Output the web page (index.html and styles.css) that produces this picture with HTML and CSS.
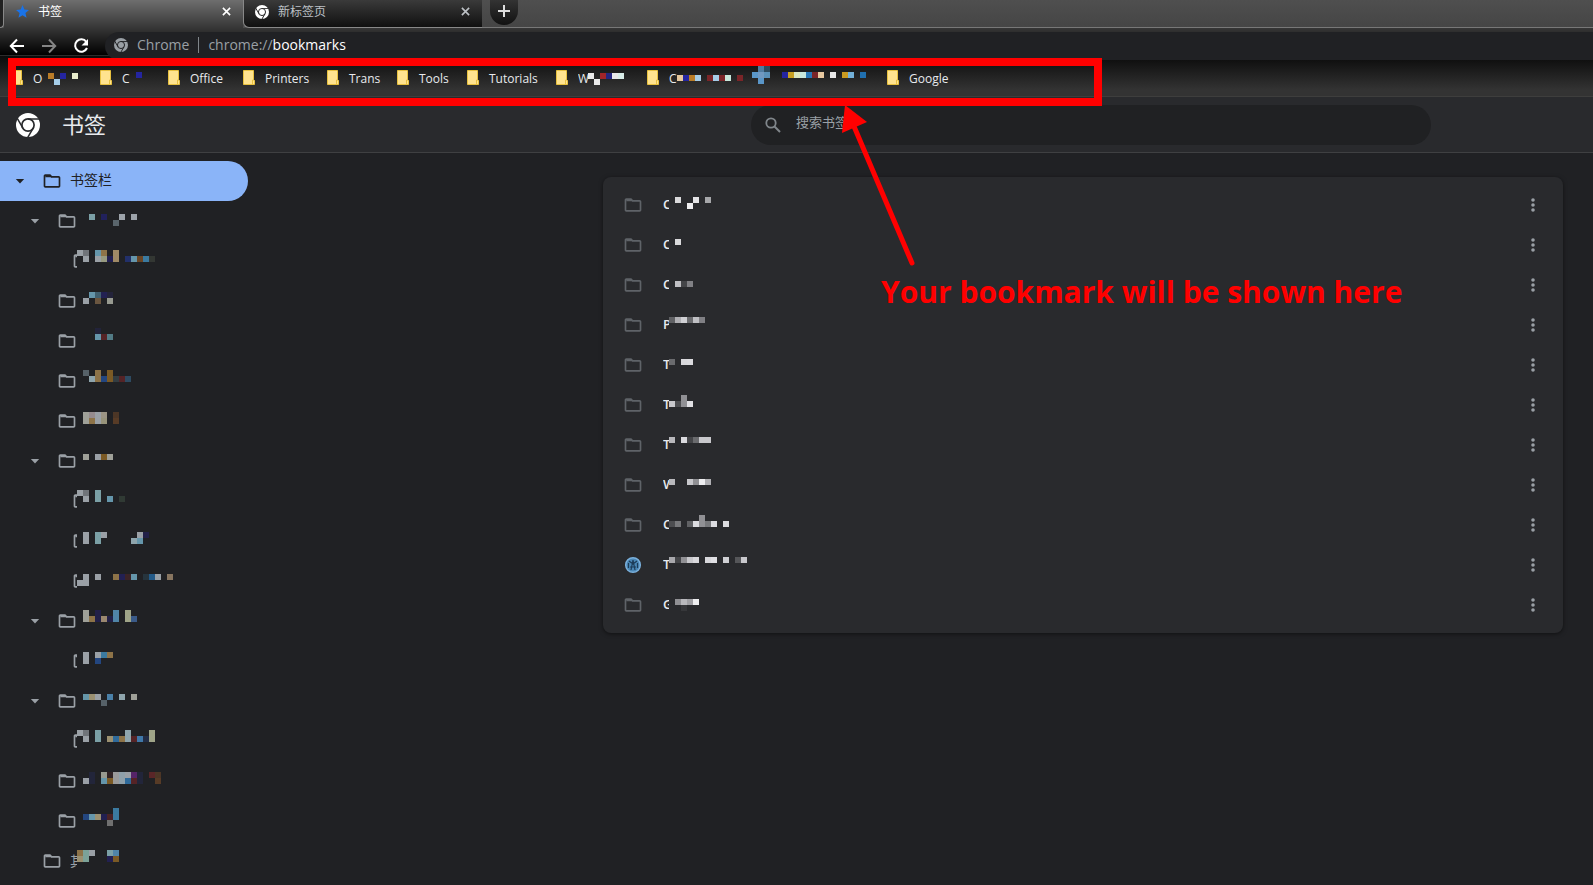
FILE: index.html
```html
<!DOCTYPE html>
<html lang="zh-CN">
<head>
<meta charset="utf-8">
<title>书签</title>
<link rel="stylesheet" href="styles.css">
</head>
<body>
<svg class="defs" aria-hidden="true">
  <symbol id="folder" viewBox="0 0 24 24"><path fill-rule="evenodd" fill="currentColor" d="M9.2 6l2 2H20v10H4V6h5.200M10 4H4c-1.100 0-2 .9-2 2v12c0 1.100.9 2 2 2h16c1.100 0 2-.9 2-2V8c0-1.100-.9-2-2-2h-8l-2-2z"/><path fill="currentColor" d="M4 5h6l2 2.500H4z"/></symbol>
  <symbol id="more" viewBox="0 0 4 14"><circle cx="2" cy="2" r="1.800" fill="currentColor"/><circle cx="2" cy="7" r="1.800" fill="currentColor"/><circle cx="2" cy="12" r="1.800" fill="currentColor"/></symbol>
  <symbol id="arrow" viewBox="0 0 10 5"><path d="M.8 0h8.400L5 4.500z" fill="currentColor"/></symbol>
  <symbol id="cross" viewBox="0 0 10 10"><path d="M1 1l8 8M9 1l-8 8" stroke="currentColor" stroke-width="1.800"/></symbol>
  <symbol id="chrome" viewBox="0 0 24 24">
    <mask id="gaps"><rect width="24" height="24" fill="#fff"/><circle cx="12" cy="12" r="6.100" fill="none" stroke="#000" stroke-width="1.700"/><g stroke="#000" stroke-width="1.500"><path d="M12 6h12"/><path d="M12 6h12" transform="rotate(120 12 12)"/><path d="M12 6h12" transform="rotate(240 12 12)"/></g></mask>
    <circle cx="12" cy="12" r="12" fill="currentColor" mask="url(#gaps)"/>
  </symbol>
  <symbol id="note" viewBox="0 0 12 15"><path d="M.5.5h10v9l1 1v4H.5z" fill="#ffe38f" stroke="#e8c13f"/><path d="M9.500 14v-4h1.500" fill="none" stroke="#e8c13f"/></symbol>
</svg>

<nav class="tabs">
  <span class="edge"></span>
  <div class="tab active">
    <svg class="star" viewBox="0 0 24 24"><path fill="#1a73e8" d="M12 0l3.400 8.400 8.600.6-6.600 5.600 2.100 8.900L12 18.700l-7.500 4.800 2.100-8.900L0 9l8.600-.6z"/></svg>
    <span class="tab-name">书签</span>
    <button class="close" aria-label="关闭"><svg><use href="#cross"/></svg></button>
  </div>
  <div class="tab idle">
    <svg class="mark"><use href="#chrome"/></svg>
    <span class="tab-name">新标签页</span>
    <button class="close" aria-label="关闭"><svg><use href="#cross"/></svg></button>
  </div>
  <div class="strip"><button class="plus" aria-label="新建标签页"><svg viewBox="0 0 12 12"><path d="M6 0v12M0 6h12" stroke="#ddd" stroke-width="2"/></svg></button></div>
</nav>

<div class="toolbar">
  <button class="nav" aria-label="后退"><svg viewBox="0 0 16 16"><path d="M15 8H2M8 1.500L1.800 8 8 14.500" fill="none" stroke="#fff" stroke-width="2"/></svg></button>
  <button class="nav" aria-label="前进"><svg viewBox="0 0 16 16"><path d="M1 8h13M8 1.500L14.200 8 8 14.500" fill="none" stroke="#858585" stroke-width="2"/></svg></button>
  <button class="nav" aria-label="刷新"><svg viewBox="0 0 16 16"><path d="M13.300 3.800A6.200 6.200 0 1 0 14 10" fill="none" stroke="#fff" stroke-width="2"/><path d="M15 1v6.500H8.500z" fill="#fff"/></svg></button>
  <div class="omnibox">
    <svg class="mark"><use href="#chrome"/></svg>
    <span class="site">Chrome</span>
    <span class="url">chrome://<b>bookmarks</b></span>
  </div>
</div>

<nav class="bookbar">
  <a class="w-a" href="#"><svg class="note"><use href="#note"/></svg><span>O</span><svg class="px" data-top="16" data-px="1 0 b97c27,3 0 2425a0,2 1 a5cde8,5 0 e8eccc"></svg></a>
  <a class="w-b" href="#"><svg class="note"><use href="#note"/></svg><span>C</span><svg class="px" data-top="15" data-px="1 0 2425a0"></svg></a>
  <a class="w-c" href="#"><svg class="note"><use href="#note"/></svg><span>Office</span></a>
  <a class="w-d" href="#"><svg class="note"><use href="#note"/></svg><span>Printers</span></a>
  <a class="w-e" href="#"><svg class="note"><use href="#note"/></svg><span>Trans</span></a>
  <a class="w-e" href="#"><svg class="note"><use href="#note"/></svg><span>Tools</span></a>
  <a class="w-b" href="#"><svg class="note"><use href="#note"/></svg><span>Tutorials</span></a>
  <a class="w-h" href="#"><svg class="note"><use href="#note"/></svg><span class="cut-l">W</span><svg class="px" data-top="16" data-px="0 0 e8e8e8,1 1 e8e8e8,2 0 a22529,3 0 252680,4 0 e8e8e8,5 0 d8ece8"></svg></a>
  <a class="w-f" href="#"><svg class="note"><use href="#note"/></svg><span class="cut-m">C</span><svg class="px" data-top="18" data-px="0 0 e6c79c,1 0 2425a0,2 0 b97c27,3 0 a5cde8,5 0 7a2528,6 0 a5cde8,7 0 7a2528,8 0 c8e8dc,10 0 7a2528"></svg></a>
  <a class="w-g" href="#" aria-label="T"><svg class="px" data-top="9" data-px="1 0 4f7ba0,2 0 2e4a5e,0 1 5a96c8,1 1 7098c0,2 1 5a90b8,1 2 5a96c8,5 1 2425a0,6 1 c9a021,7 1 dde8c0,8 1 c8e8dc,9 1 2878b8,10 1 7a2528,11 1 e8c8a0,13 1 e8e8e8,15 1 c99a20,16 1 72b0d8,18 1 2070b0"></svg></a>
  <a href="#"><svg class="note"><use href="#note"/></svg><span>Google</span></a>
</nav>

<header class="head">
  <div class="brand"><svg><use href="#chrome"/></svg><h1>书签</h1></div>
  <label class="search"><svg viewBox="0 0 16 16"><circle cx="6" cy="6" r="4.700" fill="none" stroke="#80868b" stroke-width="1.800"/><path d="M9.500 9.500l5.500 5.500" stroke="#80868b" stroke-width="2"/></svg><input type="search" placeholder="搜索书签" aria-label="搜索书签"></label>
</header>

<main class="main">
  <ul class="tree" id="tree">
    <li class="row root selected"><svg class="arrow"><use href="#arrow"/></svg><svg class="folder"><use href="#folder"/></svg><span class="name">书签栏</span></li>
  </ul>
  <ul class="list" id="list"></ul>
</main>

<svg class="note-arrow" viewBox="0 0 1102 270" aria-hidden="true"><rect x="12" y="62" width="1086" height="40" fill="none" stroke="#f00" stroke-width="8"/><path d="M845 105l22 17-25 11z" fill="#f00"/><path d="M853 124l59 139" stroke="#f00" stroke-width="5" stroke-linecap="round"/></svg>
<p class="callout">Your bookmark will be shown here</p>
<script src="app.js"></script>
</body>
</html>
```
FILE: styles.css
```css
* { box-sizing: border-box; }
body { margin: 0; min-height: 100vh; background: #202124; color: #e8eaed; font: 13px/18px "Open Sans", "Noto Sans CJK SC", sans-serif; overflow: hidden; }
button { border: 0; padding: 0; background: none; color: inherit; display: grid; place-items: center; }
ul, h1, p { margin: 0; padding: 0; list-style: none; font-weight: 400; }
svg { display: block; flex: none; }
.defs { position: absolute; width: 0; height: 0; }

.tabs { display: flex; height: 28px; background: #4b4b4b; }
.edge { width: 4px; border: solid #888; border-width: 0 1px 1px 0; border-radius: 0 0 6px 0; background: #222; }
.tab { display: flex; align-items: center; width: 239px; padding: 0 12px 5px 12px; font-size: 12px; }
.active { background: linear-gradient(#6e6e6e, #363636); color: #fff; }
.idle { background: linear-gradient(#3a3a3a, #101010); color: #bdc1c6; border: solid #888; border-width: 0 0 1px 1px; border-radius: 0 0 0 6px; padding: 0 12px 4px 11px; }
.star { width: 13px; height: 13px; }
.mark { width: 14px; height: 14px; }
.idle .mark { color: #fff; }
.tab-name { margin-left: 9px; flex: 1; }
.close svg { width: 9px; height: 9px; }
.strip { flex: 1; height: 28px; padding-left: 8px; background: linear-gradient(#4f4f4f, #454545); border-bottom: 1px solid #777; }
.plus { width: 28px; height: 25px; padding-bottom: 3px; border-radius: 0 0 14px 14px; background: linear-gradient(#333, #111); }
.plus svg { width: 12px; height: 12px; }

.toolbar { display: flex; height: 28px; background: linear-gradient(#363636, #000); border-bottom: 1px solid #2c2c2c; padding-left: 9px; }
.nav { width: 16px; height: 36px; margin-right: 16px; }
.nav svg { width: 16px; height: 16px; }
.omnibox { flex: 1; display: flex; align-items: center; height: 28px; margin-top: 4px; padding: 0 0 2px 9px; background: #202124; border-radius: 14px 0 0 14px; color: #9aa0a6; font-size: 14px; z-index: 1; }
.site { margin: 0 9px; padding-right: 9px; border-right: 1px solid #80868b; line-height: 16px; }
.url b { color: #fff; font-weight: 400; }

.bookbar { display: flex; height: 41px; background: linear-gradient(#0b0b0b, #333 85%); border-bottom: 1px solid #3e3e3d; padding-left: 11px; }
.bookbar a { display: flex; align-items: center; height: 42px; color: #e8eaed; text-decoration: none; font-size: 12px; }
.bookbar span { padding-top: 3px; }
.note { width: 12px; height: 15px; margin-right: 10px; }
.w-a { width: 89px; }
.w-b { width: 89px; }
.bookbar .w-b:nth-child(2) { width: 68px; }
.w-c { width: 75px; }
.w-d { width: 84px; }
.w-e { width: 70px; }
.w-f { width: 105px; }
.w-g { width: 135px; }
.w-h { width: 91px; }
.cut-l { width: 10px; overflow: hidden; }
.cut-m { width: 8px; overflow: hidden; }
.px { width: 126px; height: 40px; }
.bookbar .px { margin-right: -126px; }

.head { display: grid; grid-template-columns: minmax(0, 1fr) minmax(0, 680px) 162px; align-items: center; height: 56px; background: #292a2d; border-bottom: 1px solid #3f4042; }
.brand { display: flex; align-items: center; gap: 22px; padding-left: 16px; color: #fff; }
.brand svg { width: 24px; height: 24px; }
.brand h1 { padding-bottom: 2px; font-size: 22px; line-height: 32px; color: #e8eaed; }
.search { display: flex; align-items: center; gap: 15px; height: 40px; padding-left: 14px; border-radius: 20px; background: #202123; }
.search svg { width: 16px; height: 16px; }
.search input { flex: 1; min-width: 0; border: 0; outline: 0; padding: 0 0 5px; background: none; color: #e8eaed; font: inherit; }
.search input::placeholder { color: #9aa0a6; opacity: 1; }

.main { display: grid; grid-template-columns: minmax(0, 1fr) minmax(0, 960px); padding-right: 30px; align-items: start; }
.tree { padding-top: 8px; color: #9aa0a6; }
.row { display: flex; align-items: center; height: 40px; padding-left: 30px; }
.folder { width: 20px; height: 20px; }
.arrow { width: 10px; height: 5px; margin-right: 17px; }
.root { padding-left: 15px; }
.leaf { padding-left: 57px; }
.child { padding-left: 72px; }
.last { padding-left: 42px; }
.child .clip { width: 5px; overflow: hidden; }
.name { margin-left: 8px; font-size: 14px; }
.last .name { width: 7px; overflow: hidden; }
.selected { width: 248px; background: #8ab4f8; color: #202124; border-radius: 0 20px 20px 0; }
.selected .name { padding-bottom: 2px; }
.list { margin-top: 24px; padding: 8px 0; border-radius: 8px; background: #292a2d; box-shadow: 0 1px 4px rgba(0, 0, 0, .5); }
.list .row { padding: 0 24px 0 20px; color: #5f6368; }
.list .letter { width: 6px; margin-left: 20px; padding-bottom: 2px; overflow: hidden; color: #e8eaed; font-weight: 600; }
.list button { width: 12px; height: 24px; margin-left: auto; color: #9aa0a6; }
.list button svg { width: 4px; height: 14px; }

.note-arrow { position: absolute; left: 0; top: 0; width: 1102px; height: 270px; z-index: 2; pointer-events: none; }
.callout { position: absolute; left: 881px; top: 272px; z-index: 2; color: #f00; font: 700 30px/40px "Open Sans", sans-serif; white-space: nowrap; }
```
FILE: app.js
```js
const NS = "http://www.w3.org/2000/svg";
const CELL = 6;

// kind | top offset in row | "column row colour" cells
const tree = [
  ["open", 13, "2 0 7ba0a6,4 0 21215c,6 1 5a656c,7 0 9da3aa,9 0 9da3aa"],
  ["child", 9, "0 0 9aa0a6,1 0 707479,1 1 9aa0a6,3 0 6596ab,3 1 9aa0a6,4 0 8d7348,4 1 979a80,5 1 222052,6 0 a08a66,6 1 a08a66,8 1 22306a,9 1 6596ab,10 1 6a4524,11 1 3b7aa0,12 1 333733"],
  ["leaf", 11, "2 0 6596ab,3 0 41606f,4 0 222052,5 0 23233a,1 1 9aa0a6,3 1 6a5640,5 1 979a90"],
  ["leaf", 7, "3 0 22233a,3 1 6596ab,4 1 552326,5 1 527b85"],
  ["leaf", 9, "1 0 566168,3 0 8d7348,5 0 7b5a25,2 1 8fa5ad,3 1 8d7348,4 1 234680,5 1 7b5a25,6 1 333d42,7 1 552326,8 1 2e4b62"],
  ["leaf", 11, "1 0 9fa098,2 0 958b8e,3 0 9aa0a6,4 0 9b9484,6 0 4c3626,1 1 9fa098,2 1 8d7348,3 1 9aa0a6,4 1 97937a,6 1 573b26"],
  ["open", 13, "1 0 9fa098,3 0 9aa0a6,4 0 7b5a25,5 0 9fa098"],
  ["child", 9, "0 0 9aa0a6,1 0 707479,1 1 9aa0a6,3 0 7ba0a6,3 1 7ba0a6,5 1 6596ab,7 1 303a34"],
  ["child", 11, "1 0 9aa0a6,1 1 9aa0a6,3 0 7ba0a6,3 1 7ba0a6,4 0 9aa0a6,9 1 8fa5ad,10 0 9aa0a6,10 1 6596ab,11 0 222048"],
  ["child", 13, "1 0 9aa0a6,1 1 9aa0a6,0 1 9aa0a6,3 0 9aa0a6,6 0 8d7348,7 0 222052,8 0 3b2326,9 0 6596ab,11 0 26343d,12 0 235a88,13 0 9aa0a6,15 0 877560"],
  ["open", 9, "1 0 9fa098,1 1 9fa098,2 1 8d7348,3 0 222048,3 1 222048,4 1 9b8870,5 1 222048,6 0 5085a8,6 1 5085a8,8 0 9fa488,8 1 9fa488,9 1 3a5a88"],
  ["child", 11, "1 0 9aa0a6,1 1 9aa0a6,3 0 9aa0a6,4 0 3b7aa0,5 0 8d7348,3 1 234680"],
  ["open", 13, "1 0 6596a8,2 0 9b9070,3 0 9aa0a6,4 1 566168,5 0 4a80a8,7 0 8fa5ad,9 0 9fa098"],
  ["child", 9, "0 0 9aa0a6,1 0 707479,1 1 9aa0a6,3 0 7ba0a6,3 1 7ba0a6,5 1 9b9070,6 1 2f6a9a,7 1 8d7348,8 0 8fa5ad,8 1 8fa5ad,9 1 552326,10 1 4078a8,11 1 222c44,12 0 9fa488,12 1 9fa488"],
  ["leaf", 11, "2 0 22253a,4 0 979a90,5 0 302325,6 0 9a9a9a,7 0 8fa0aa,8 0 9aa0a6,9 0 552468,10 0 22253a,12 0 5a2628,13 0 4c3626,1 1 9aa0a6,2 1 22253a,4 1 6596ab,5 1 7b5a25,6 1 9a9a9a,7 1 8fa0aa,8 1 2f6a9a,9 1 552326,10 1 22253a,13 1 573b26"],
  ["leaf", 7, "6 0 3b7aa0,1 1 234680,2 1 6596ab,3 1 9b9070,4 1 222052,5 1 4a2326,6 1 3b7aa0,5 2 707070"],
  ["last", 9, "0 0 8d7348,1 0 7ba298,2 0 9aa0a6,5 0 7ba0a6,6 0 5085a8,0 1 9b9070,1 1 7ba298,5 1 222052,6 1 7b5a25"]
];

const list = [
  ["C", 12, "1 0 dadadc,3 1 eeeef0,4 0 e4e4e6,6 0 a6a7aa"],
  ["C", 14, "1 0 dadadc"],
  ["C", 16, "1 0 c0c0c4,2 0 444548,3 0 808084"],
  ["P", 12, "0 0 606164,1 0 b0b0b4,2 0 d0d0d4,3 0 6a6b6e,4 0 c0c0c4,5 0 808084"],
  ["T", 14, "0 0 6a6b6e,2 0 d8d8dc,3 0 dadade"],
  ["T", 10, "0 1 c8c8cc,1 1 4c4d50,2 0 909094,2 1 909094,3 1 e0e0e4"],
  ["T", 12, "0 0 b8b8bc,2 0 dadade,3 0 444548,4 0 6a6b6e,5 0 c8c8cc,6 0 c8c8cc"],
  ["W", 14, "0 0 b8b8bc,3 0 c8c8cc,4 0 909094,5 0 eeeef0,6 0 b0b0b4"],
  ["C", 10, "0 1 4c4d50,1 1 77787b,3 1 606164,4 1 dcdce0,5 0 909094,5 1 909094,6 1 77787b,7 1 dcdce0,9 1 dcdce0"],
  ["T", 12, "0 0 a8a8ac,1 0 444548,2 0 909094,3 0 c8c8cc,4 0 d8d8dc,6 0 d8d8dc,7 0 e0e0e4,9 0 d0d0d4,11 0 555659,12 0 c8c8cc"],
  ["G", 14, "1 0 909094,2 0 b8b8bc,3 0 a0a0a4,4 0 eeeef0,2 1 36373a"]
];

const use = (id, cls) => `<svg class="${cls}"><use href="#${id}"/></svg>`;
const px = (top, cells) => `<svg class="px" data-top="${top}" data-px="${cells}"></svg>`;
const globe = `<svg class="folder" viewBox="0 0 20 20"><circle cx="10" cy="10" r="7.300" fill="#4a86b4" stroke="#7ab0dc" stroke-width="1.500"/><path d="M5.500 13V8M8 15l2-10 2 10M14.500 13V8M6 6l4 3 4-3M7 12h6" fill="none" stroke="#1d3c58" stroke-width="1.200"/></svg>`;

document.getElementById("tree").insertAdjacentHTML("beforeend", tree.map(([kind, top, cells]) => {
  const folder = use("folder", "folder");
  const icon = kind === "child" ? `<span class="clip">${folder}</span>` : folder;
  return `<li class="row ${kind}">${kind === "open" ? use("arrow", "arrow") : ""}${icon}${kind === "last" ? '<span class="name">其</span>' : ""}${px(top, cells)}</li>`;
}).join(""));

document.getElementById("list").innerHTML = list.map(([letter, top, cells], i) =>
  `<li class="row">${i === 9 ? globe : use("folder", "folder")}<span class="letter">${letter}</span>${px(top, cells)}<button aria-label="更多操作">${use("more", "")}</button></li>`
).join("");

document.querySelectorAll("[data-px]").forEach(svg => {
  svg.dataset.px.split(",").forEach(cell => {
    const [c, r, colour] = cell.split(" ");
    const rect = document.createElementNS(NS, "rect");
    rect.setAttribute("x", c * CELL);
    rect.setAttribute("y", r * CELL + Number(svg.dataset.top));
    rect.setAttribute("width", CELL);
    rect.setAttribute("height", CELL);
    rect.setAttribute("fill", "#" + colour);
    svg.append(rect);
  });
});
```
